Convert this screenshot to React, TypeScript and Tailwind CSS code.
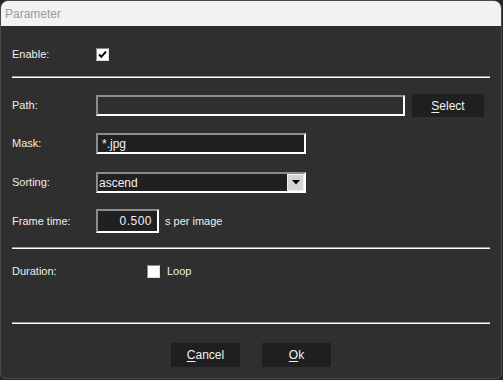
import type { ReactNode } from "react";

const font = { fontFamily: '"Liberation Sans", Arial, sans-serif' };

const Sunken = ({ className, children }: { className: string; children?: ReactNode }) => (
  <div
    className={`box-border flex items-center border-2 border-t-[#8c8c8c] border-l-[#8c8c8c] border-r-white border-b-white ${className}`}
  >
    {children}
  </div>
);

const Check = ({ checked }: { checked?: boolean }) => (
  <span className="box-border flex size-[13px] items-center justify-center border border-t-[#8a8a8a] border-l-[#8a8a8a] border-r-[#dcdcdc] border-b-[#dcdcdc] bg-white">
    {checked && (
      <svg width="9" height="9" viewBox="0 0 9 9" aria-hidden>
        <path d="M1 4.5 L3.3 6.8 L8 1.6" stroke="#000" strokeWidth="2" fill="none" />
      </svg>
    )}
  </span>
);

const Rule = () => (
  <div className="flex flex-col">
    <div className="h-px bg-[#9a9a9a]" />
    <div className="h-px bg-white" />
  </div>
);

const Btn = ({ mn, rest, className }: { mn: string; rest: string; className: string }) => (
  <div className={`flex items-center justify-center bg-[#1f1f1f] text-[12px] text-[#f2f2f2] ${className}`}>
    <span className="underline underline-offset-2">{mn}</span>
    {rest}
  </div>
);

const Label = ({ children }: { children: ReactNode }) => (
  <span className="w-[84px] shrink-0 text-[11px] text-[#eeeeea]">{children}</span>
);

export default function App() {
  return (
    <div className="h-[380px] w-[503px] bg-[#262626]" style={font}>
      <div className="box-border flex h-[379px] w-[502px] flex-col overflow-hidden rounded-t-[8px] rounded-b-[6px] border border-[#4a4a4a] bg-[#2f2f2f]">
        <div className="flex h-[25px] shrink-0 items-center bg-[#f2f2f2] pl-[4px] text-[12px] text-[#9a9a9a]">
          Parameter
        </div>

        <div className="flex flex-col px-[11px]">
          <div className="mt-[18px] flex h-[20px] items-center">
            <Label>Enable:</Label>
            <Check checked />
          </div>

          <div className="mt-[12px] w-[478px]">
            <Rule />
          </div>

          <div className="mt-[16px] flex h-[23px] items-center">
            <Label>Path:</Label>
            <Sunken className="h-[21px] w-[309px] bg-[#2f2f2f]" />
            <Btn mn="S" rest="elect" className="ml-[7px] h-[23px] w-[72px]" />
          </div>

          <div className="mt-[16px] flex h-[21px] items-center">
            <Label>Mask:</Label>
            <Sunken className="h-[21px] w-[210px] bg-[#202020] pl-[4px] text-[12px] text-[#f2f2f2]">*.jpg</Sunken>
          </div>

          <div className="mt-[18px] flex h-[21px] items-center">
            <Label>Sorting:</Label>
            <Sunken className="h-[21px] w-[210px] justify-between bg-[#202020] pl-[1px] text-[12px] text-[#f2f2f2]">
              <span>ascend</span>
              <span className="box-border flex h-[17px] w-[17px] items-center justify-center border border-[#f0f0f0] bg-[#d4d4d4]">
                <svg width="8" height="5" viewBox="0 0 8 5" aria-hidden>
                  <path d="M0 0 H8 L4 4.5 Z" fill="#000" />
                </svg>
              </span>
            </Sunken>
          </div>

          <div className="mt-[16px] flex h-[24px] items-center">
            <Label>Frame time:</Label>
            <Sunken className="h-[24px] w-[63px] justify-end bg-[#202020] pr-[5px] text-[12px] tracking-[0.5px] text-[#f2f2f2]">
              0.500
            </Sunken>
            <span className="ml-[6px] text-[11px] text-[#eeeeea]">s per image</span>
          </div>

          <div className="mt-[14px] w-[478px]">
            <Rule />
          </div>

          <div className="mt-[12px] flex h-[20px] items-center">
            <span className="w-[135px] shrink-0 text-[11px] text-[#eeeeea]">Duration:</span>
            <Check />
            <span className="ml-[7px] text-[11px] text-[#eeeeea]">Loop</span>
          </div>

          <div className="mt-[41px] w-[478px]">
            <Rule />
          </div>

          <div className="mt-[19px] flex h-[24px] items-center pl-[159px]">
            <Btn mn="C" rest="ancel" className="h-[24px] w-[69px]" />
            <Btn mn="O" rest="k" className="ml-[22px] h-[24px] w-[69px]" />
          </div>
        </div>
      </div>
    </div>
  );
}
